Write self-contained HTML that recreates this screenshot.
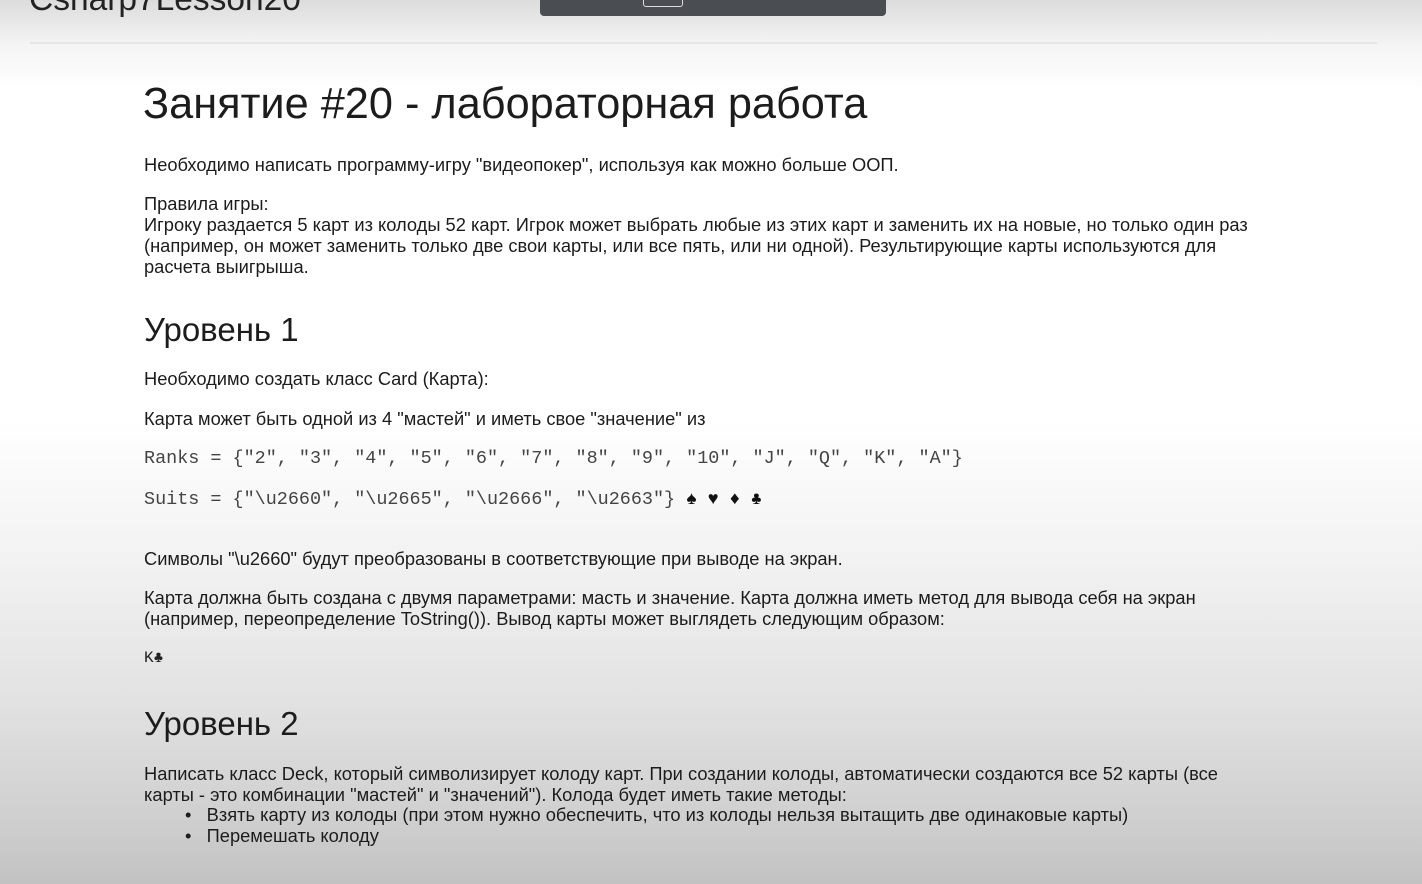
<!DOCTYPE html>
<html><head><meta charset="utf-8"><style>
html,body{margin:0;padding:0}
body{width:1422px;height:884px;overflow:hidden;position:relative;
background:linear-gradient(to bottom,#dcdcdc 0px,#f4f4f4 45px,#ffffff 90px,#ffffff 420px,#f2f2f2 560px,#e2e2e2 700px,#cfcfcf 820px,#c2c2c2 884px);
font-family:"Liberation Sans",Arial,sans-serif;color:#1c1c1c}
.a{position:absolute;white-space:nowrap;margin:0}
.p{font-size:18.3px;left:144px;line-height:21px}
.m{font-family:"Liberation Mono","Courier New",monospace;font-size:18.45px;color:#444;left:144px}
h1,h2{font-weight:normal}
</style></head><body>
<div class="a" style="left:29px;top:-19px;font-size:33.5px;color:#222">Csharp7Lesson20</div>
<div class="a" style="left:540px;top:0;width:346px;height:16px;background:#4a4d52;border-radius:0 0 4px 4px"></div>
<div class="a" style="left:643px;top:-4px;width:38px;height:9px;border:1px solid #ddd;border-radius:3px"></div>
<div class="a" style="left:30px;top:42px;width:1347px;height:2px;background:#e6e6e6"></div>

<h1 class="a" style="left:143px;top:80px;font-size:43.3px;line-height:48px">Занятие #20 - лабораторная работа</h1>
<div class="a p" style="top:154px">Необходимо написать программу-игру "видеопокер", используя как можно больше ООП.</div>
<div class="a p" style="top:193px">Правила игры:<br>Игроку раздается 5 карт из колоды 52 карт. Игрок может выбрать любые из этих карт и заменить их на новые, но только один раз<br>(например, он может заменить только две свои карты, или все пять, или ни одной). Результирующие карты используются для<br>расчета выигрыша.</div>
<h2 class="a" style="left:144px;top:311px;font-size:33px;line-height:38px">Уровень 1</h2>
<div class="a p" style="top:368px">Необходимо создать класс Card (Карта):</div>
<div class="a p" style="top:408px">Карта может быть одной из 4 "мастей" и иметь свое "значение" из</div>
<div class="a m" style="top:448px">Ranks = {"2", "3", "4", "5", "6", "7", "8", "9", "10", "J", "Q", "K", "A"}</div>
<div class="a m" style="top:489px">Suits = {"\u2660", "\u2665", "\u2666", "\u2663"} <span style="color:#111;font-size:18px">♠ ♥ ♦ ♣</span></div>
<div class="a p" style="top:548px">Символы "\u2660" будут преобразованы в соответствующие при выводе на экран.</div>
<div class="a p" style="top:587px">Карта должна быть создана с двумя параметрами: масть и значение. Карта должна иметь метод для вывода себя на экран<br>(например, переопределение ToString()). Вывод карты может выглядеть следующим образом:</div>
<div class="a m" style="top:649px;font-size:16px;color:#222">K♣</div>
<h2 class="a" style="left:144px;top:705px;font-size:33px;line-height:38px">Уровень 2</h2>
<div class="a p" style="top:763px">Написать класс Deck, который символизирует колоду карт. При создании колоды, автоматически создаются все 52 карты (все<br>карты - это комбинации "мастей" и "значений"). Колода будет иметь такие методы:</div>
<div class="a p" style="top:804px;left:185px">•&nbsp;&nbsp;&nbsp;Взять карту из колоды (при этом нужно обеспечить, что из колоды нельзя вытащить две одинаковые карты)<br>•&nbsp;&nbsp;&nbsp;Перемешать колоду</div>
</body></html>
